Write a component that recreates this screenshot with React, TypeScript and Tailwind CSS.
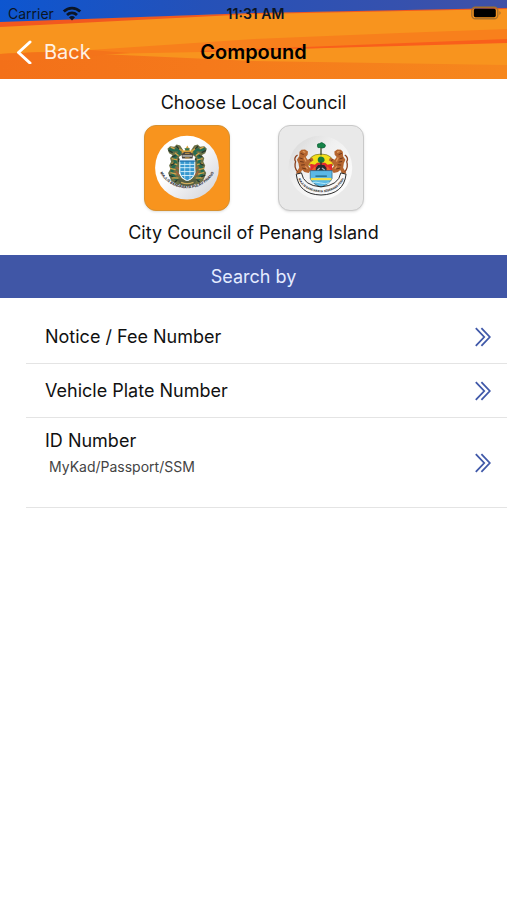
import { useState } from 'react'

type Council = 'island' | 'mainland'

const COUNCILS: { key: Council; name: string }[] = [
  { key: 'island', name: 'City Council of Penang Island' },
  { key: 'mainland', name: 'City Council of Seberang Perai' },
]

const SEARCHES = [
  { label: 'Notice / Fee Number' },
  { label: 'Vehicle Plate Number' },
  { label: 'ID Number', hint: 'MyKad/Passport/SSM' },
]

function HeaderArt() {
  return (
    <svg
      className="absolute inset-0 h-full w-full"
      viewBox="0 0 507 79"
      preserveAspectRatio="none"
      aria-hidden="true"
    >
      <defs>
        <linearGradient id="sky">
          <stop offset="0" stopColor="#0d56d0" />
          <stop offset="0.4" stopColor="#2551b8" />
          <stop offset="1" stopColor="#3f51a8" />
        </linearGradient>
        <linearGradient id="deep">
          <stop offset="0" stopColor="#f37019" />
          <stop offset="0.4" stopColor="#f5791b" />
          <stop offset="1" stopColor="#f6871d" />
        </linearGradient>
      </defs>
      <path d="M0 0H507V79H0Z" fill="#f8941e" />
      <path d="M0 54L90 50L100 54L253 61L507 65V79H0Z" fill="url(#deep)" />
      <path d="M0 54L90 50L254 39L400 33L507 29V40L253 51L100 54Z" fill="#f8801c" />
      <path d="M0 54L90 50L130 53L100 55L60 60H0Z" fill="#f4731a" />
      <path d="M200 51L507 39V43L290 49L200 52Z" fill="#f95f1b" />
      <path d="M0 21L254 13L507 7V9L254 14L0 27Z" fill="#f2581f" />
      <path d="M0 0H507V8L254 13L0 22Z" fill="url(#sky)" />
    </svg>
  )
}

function Wifi() {
  return (
    <svg className="h-4 w-5" viewBox="0 0 20 16" fill="none" stroke="#0b1526" strokeWidth="2.8" aria-hidden="true">
      <path d="M1.8 5.6C6.5 1 13.5 1 18.2 5.6" />
      <path d="M5 9C8 6.2 12 6.2 15 9" />
      <path d="M7 11.2C8.8 9.7 11.2 9.7 13 11.2L10 14.4Z" fill="#0b1526" stroke="none" />
    </svg>
  )
}

function Battery() {
  return (
    <svg className="h-4 w-8" viewBox="0 0 32 16" aria-hidden="true">
      <rect x="0.8" y="1.2" width="26" height="11.6" rx="3.5" fill="none" stroke="#a8702a" strokeWidth="1.4" />
      <rect x="2.8" y="2.8" width="22" height="8.4" rx="1.6" fill="#000" />
      <path d="M28.4 5Q31 7 28.4 9Z" fill="#a8702a" />
    </svg>
  )
}

function DoubleChevron() {
  return (
    <svg className="h-5 w-4" viewBox="0 0 16 20" fill="none" stroke="#4059a9" strokeWidth="1.8" aria-hidden="true">
      <path d="M0.8 1.2L9.2 10L0.8 18.8" />
      <path d="M6.4 1.2L14.8 10L6.4 18.8" />
    </svg>
  )
}

function IslandCrest() {
  return (
    <svg className="h-full w-full" viewBox="27 22 258 258" aria-hidden="true">
      <defs>
        <linearGradient id="plate1" x1="0" y1="0" x2="1" y2="1">
          <stop offset="0.4" stopColor="#ffffff" />
          <stop offset="1" stopColor="#cfd0d6" />
        </linearGradient>
        <path id="motto" d="M75 169A96 96 0 0 0 237 169" />
      </defs>
      <circle cx="156" cy="150" r="98" fill="url(#plate1)" />
      <g id="dragon">
        <path d="M96 92L104 84L117 86L124 79L135 82L144 96L141 110L131 117L134 128L131 168L140 182L152 190L146 202L124 201L108 191L102 177L98 166L105 154L101 143L107 132L104 120L112 112L101 106Z" fill="#6b7046" />
        <path d="M102 91Q110 98 121 95Q134 94 133 106Q118 113 117 124Q125 134 115 146Q107 158 112 171Q119 189 144 195" fill="none" stroke="#256b52" strokeWidth="9" />
        <path d="M106 87L118 92M128 87L138 97M119 105L130 113M109 122L126 126M109 136L126 141M104 152L121 156M105 165L124 170M110 181L130 182M128 191L143 198" fill="none" stroke="#d6a44a" strokeWidth="4" />
        <path d="M99 97L112 104M123 84L132 92M110 116L121 113M106 143L118 137M101 173L114 178M118 194L130 186M130 122L131 133" fill="none" stroke="#24382f" strokeWidth="4" />
        <path d="M124 149L131 154M122 161L132 174" stroke="#a7613a" strokeWidth="4" />
      </g>
      <use href="#dragon" transform="translate(313 0) scale(-1 1)" />
      <path d="M136 93L148 98L157 82L166 98L177 93L172 106H142Z" fill="#d8a13b" />
      <path d="M148 90H165L161 97H152Z" fill="#397650" />
      <path d="M139 108L148 102H166L175 108L173 122H141Z" fill="#4c4741" />
      <path d="M142 114H172" stroke="#b3b3ac" strokeWidth="5" />
      <path d="M150 106H164M150 120H164" stroke="#c99c48" strokeWidth="3" />
      <path d="M134 127H180V164Q178 182 157 190Q136 182 134 164Z" fill="#3698cf" stroke="#f2f7fa" strokeWidth="3" />
      <path d="M134 140H180M134 150H180M136 162H178M139 174H175" stroke="#cceefa" strokeWidth="3" />
      <path d="M149 128V184M165 128V184" stroke="#e6f5fc" strokeWidth="2" />
      <path d="M134 130H180" stroke="#2577b2" strokeWidth="4" />
      <path d="M124 187L138 183Q157 199 176 183L189 187L176 203Q157 209 137 203Z" fill="#555d3f" />
      <path d="M138 195Q156 203 176 195" fill="none" stroke="#d0ac5e" strokeWidth="4" />
      <text className="font-['Inter',sans-serif] text-[11px] font-bold" fill="#25232a">
        <textPath href="#motto" startOffset="50%" textAnchor="middle">
          MAJLIS BANDARAYA PULAU PINANG
        </textPath>
      </text>
    </svg>
  )
}

function MainlandCrest() {
  return (
    <svg className="h-full w-full" viewBox="27 22 258 258" aria-hidden="true">
      <defs>
        <linearGradient id="plate2" x1="0" y1="0" x2="1" y2="1">
          <stop offset="0" stopColor="#d4d4d4" />
          <stop offset="0.4" stopColor="#f0f0f0" />
          <stop offset="1" stopColor="#ffffff" />
        </linearGradient>
        <path id="ribbon" d="M83 176Q98 222 156 226Q214 222 230 176" />
      </defs>
      <circle cx="154" cy="150" r="98" fill="url(#plate2)" />
      <path d="M119 143Q115 109 156 108Q197 109 193 143Z" fill="#f3df18" stroke="#6c6b24" strokeWidth="2" />
      <path d="M156 112V88" stroke="#3d4a24" strokeWidth="4" />
      <path d="M145 84Q143 75 152 76Q158 70 164 76Q173 79 168 87Q160 92 153 88Q145 91 145 84Z" fill="#168449" stroke="#0d5b31" strokeWidth="2" />
      <g id="tiger">
        <path d="M90 101L96 95L107 94L116 100L115 110L109 117L115 126L129 119L133 127L121 136L117 145L126 155L118 166L105 163L98 157L91 170L79 167L89 150L87 137L82 126L89 115Z" fill="#b5652f" />
        <path d="M84 163Q72 148 78 132Q71 119 84 111" fill="none" stroke="#8a4220" strokeWidth="4" />
        <path d="M93 106L103 110M90 120L100 123M92 131L103 133M95 142L106 141M98 151L110 154M120 125L126 128" stroke="#6c3318" strokeWidth="3" />
        <path d="M100 100L108 103M104 119L110 131M108 146L115 153" stroke="#e09a5c" strokeWidth="4" />
      </g>
      <use href="#tiger" transform="translate(313 0) scale(-1 1)" />
      <path d="M123 138L137 141L144 135H169L176 141L190 138V161H123Z" fill="#e22b2d" />
      <path d="M127 157L137 146L145 157M168 157L176 146L186 157" fill="#e75c2b" />
      <path d="M146 128Q145 117 156 116Q168 117 167 129Q162 137 156 134Q149 138 146 128Z" fill="#167a3c" />
      <path d="M156 132V148" stroke="#263722" strokeWidth="4" />
      <path d="M140 151L147 142H166L173 151V164H140Z" fill="#252a32" />
      <path d="M145 158L152 151M159 151L168 158" stroke="#a7b8bc" strokeWidth="4" />
      <path d="M123 159H190V183Q184 199 156 210Q128 199 123 183Z" fill="#5bb8e6" stroke="#285970" strokeWidth="2" />
      <path d="M125 185H188" stroke="#f2df4b" strokeWidth="7" />
      <path d="M127 197Q140 192 155 197T182 196" fill="none" stroke="#b6e8f7" strokeWidth="3" />
      <path d="M139 176H174" stroke="#1f6482" strokeWidth="4" />
      <path d="M80 170L96 166Q102 205 156 209Q210 205 217 166L233 170Q226 232 156 234Q87 232 80 170Z" fill="#f8f8f8" stroke="#262626" strokeWidth="3" />
      <text className="font-['Inter',sans-serif] text-[9px] font-bold" fill="#242424">
        <textPath href="#ribbon" startOffset="50%" textAnchor="middle">
          MAJLIS BANDARAYA SEBERANG PERAI
        </textPath>
      </text>
    </svg>
  )
}

export default function App() {
  const [council, setCouncil] = useState<Council>('island')
  const selected = COUNCILS.find((c) => c.key === council)

  return (
    <div className="min-h-screen bg-white font-['Inter',sans-serif] text-lg text-[#111111]">
      <header className="relative">
        <HeaderArt />
        <div className="relative grid h-7 grid-cols-3 items-center pr-1 pl-2 text-sm text-[#0b1526]">
          <span className="flex items-center gap-2">
            Carrier
            <Wifi />
          </span>
          <span className="text-center font-semibold">11:31 AM</span>
          <span className="flex justify-end">
            <Battery />
          </span>
        </div>
        <div className="relative grid h-[51px] grid-cols-3 items-center pb-1">
          <button type="button" className="flex items-center gap-3 pl-4 text-xl text-[#fff1e4]">
            <svg className="h-6 w-4" viewBox="0 0 16 24" fill="none" stroke="#fff" strokeWidth="3" aria-hidden="true">
              <path d="M14 2L2.5 12.5L14 23" strokeLinecap="round" strokeLinejoin="round" />
            </svg>
            Back
          </button>
          <h1 className="text-center text-xl font-semibold text-black">Compound</h1>
        </div>
      </header>

      <section className="flex flex-col items-center pt-2">
        <h2 className="leading-8">Choose Local Council</h2>
        <div className="mt-1 flex gap-12 pt-0.5">
          {COUNCILS.map(({ key, name }) => (
            <button
              key={key}
              type="button"
              aria-label={name}
              aria-pressed={council === key}
              onClick={() => setCouncil(key)}
              className={`h-[86px] w-[86px] rounded-xl border shadow-sm ${
                council === key ? 'border-[#d8912f] bg-[#f8941e]' : 'border-[#c9c9c9] bg-[#e9e9e9]'
              }`}
            >
              {key === 'island' ? <IslandCrest /> : <MainlandCrest />}
            </button>
          ))}
        </div>
        <p className="pt-1.5 pb-1.5 leading-8">{selected?.name}</p>
      </section>

      <h2 className="bg-[#4056a6] text-center leading-[43px] text-[#e4ebff]">Search by</h2>

      <ul className="ml-[26px] pt-3">
        {SEARCHES.map(({ label, hint }) => (
          <li key={label} className="border-b border-[#e4e4e4]">
            <button
              type="button"
              className={`flex w-full items-center justify-between pr-4 pl-[19px] text-left ${
                hint ? 'h-[89px]' : 'h-[53px]'
              }`}
            >
              {hint ? (
                <span className="flex flex-col pb-5">
                  {label}
                  <span className="pl-1 text-sm leading-6 text-[#444444]">{hint}</span>
                </span>
              ) : (
                label
              )}
              <DoubleChevron />
            </button>
          </li>
        ))}
      </ul>
    </div>
  )
}
